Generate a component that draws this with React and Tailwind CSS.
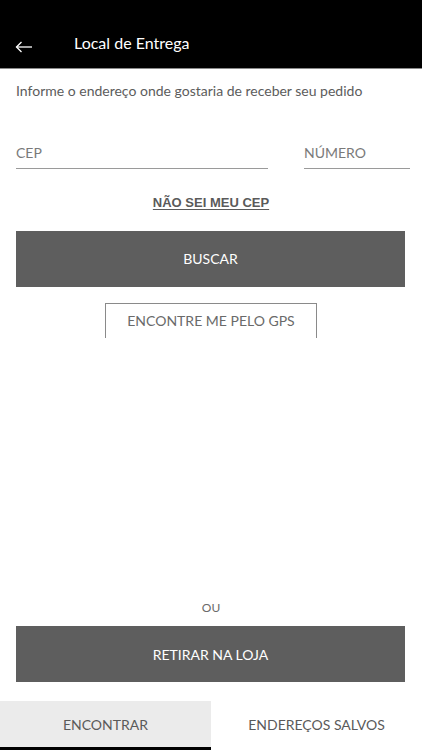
import React, { useState } from 'react';

const App = () => {
    const [tab, setTab] = useState('encontrar');

    return (
        <div className="w-[422px] h-[750px] bg-white flex flex-col font-['Lato',sans-serif] text-[#5a5a5a]">
            {/* header */}
            <div className="h-[69px] bg-black border-b border-[#8a8a8a] flex items-end pb-[15px] shrink-0">
                <button className="w-[74px] pl-[15px] flex items-center text-white">
                    <svg width="18" height="12" viewBox="0 0 18 12" fill="none" stroke="white" strokeWidth="1.3">
                        <path d="M17 6H1.5" />
                        <path d="M6.5 1L1.5 6l5 5" />
                    </svg>
                </button>
                <h1 className="text-white text-[16px] leading-5">Local de Entrega</h1>
            </div>

            <p className="px-4 pt-[12px] text-[14px] leading-5 text-[#5c5c5c]">
                Informe o endereço onde gostaria de receber seu pedido
            </p>

            {/* inputs */}
            <div className="flex pl-4 pr-[12px] mt-[39px] gap-[36px]">
                <div className="w-[252px] border-b border-[#9a9a9a] pb-[4px]">
                    <span className="text-[14px] text-[#7a7a7a]">CEP</span>
                </div>
                <div className="flex-1 border-b border-[#9a9a9a] pb-[4px]">
                    <span className="text-[14px] text-[#7a7a7a]">NÚMERO</span>
                </div>
            </div>

            <div className="flex justify-center mt-[24px]">
                <a className="font-['Liberation_Sans',sans-serif] font-bold text-[13px] text-[#5a5a5a] underline underline-offset-2">
                    NÃO SEI MEU CEP
                </a>
            </div>

            <div className="px-4 mt-[18px]">
                <button className="w-[389px] h-[56px] bg-[#5e5e5e] text-white text-[14px]">BUSCAR</button>
            </div>

            <div className="flex justify-center mt-[16px]">
                <button className="w-[212px] h-[35px] border-t border-x border-[#8a8a8a] text-[14px] text-[#6a6a6a]">
                    ENCONTRE ME PELO GPS
                </button>
            </div>

            <div className="flex-1" />

            <p className="text-center text-[12px] text-[#6a6a6a] leading-4">OU</p>

            <div className="px-4 mt-[10px]">
                <button className="w-[389px] h-[56px] bg-[#5e5e5e] text-white text-[14px]">RETIRAR NA LOJA</button>
            </div>

            {/* tabs */}
            <div className="flex mt-[19px] h-[49px] shrink-0">
                <button
                    onClick={() => setTab('encontrar')}
                    className={`w-[211px] text-[14px] text-[#5a5a5a] border-b-[3px] ${tab === 'encontrar' ? 'bg-[#ebebeb] border-black' : 'bg-white border-transparent'}`}
                >
                    ENCONTRAR
                </button>
                <button
                    onClick={() => setTab('salvos')}
                    className={`flex-1 text-[14px] text-[#5a5a5a] border-b-[3px] ${tab === 'salvos' ? 'bg-[#ebebeb] border-black' : 'bg-white border-transparent'}`}
                >
                    ENDEREÇOS SALVOS
                </button>
            </div>
        </div>
    );
};

export default App;
